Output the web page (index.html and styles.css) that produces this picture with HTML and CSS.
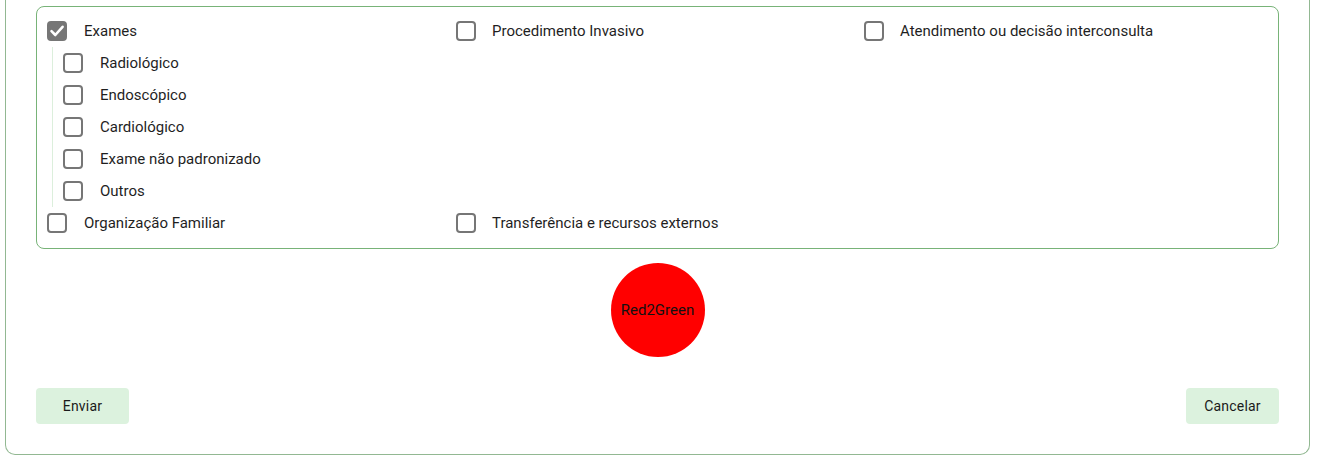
FILE: index.html
```html
<!DOCTYPE html>
<html lang="pt">
<head>
<meta charset="utf-8">
<link rel="stylesheet" href="styles.css">
</head>
<body>
<div class="card">
  <div class="fieldset">
    <div class="grid">
      <div class="group">
        <label class="item"><span class="box checked"><svg viewBox="0 0 20 20" width="20" height="20"><path d="M4.5 10.2 L8.3 14 L15.6 5.8" fill="none" stroke="#fff" stroke-width="2.6" stroke-linecap="round" stroke-linejoin="round"/></svg></span><span class="text">Exames</span></label>
        <div class="sub">
          <label class="item"><span class="box"></span><span class="text">Radiológico</span></label>
          <label class="item"><span class="box"></span><span class="text">Endoscópico</span></label>
          <label class="item"><span class="box"></span><span class="text">Cardiológico</span></label>
          <label class="item"><span class="box"></span><span class="text">Exame não padronizado</span></label>
          <label class="item"><span class="box"></span><span class="text">Outros</span></label>
        </div>
      </div>
      <label class="item tight"><span class="box"></span><span class="text">Procedimento Invasivo</span></label>
      <label class="item tight"><span class="box"></span><span class="text">Atendimento ou decisão interconsulta</span></label>
      <label class="item"><span class="box"></span><span class="text">Organização Familiar</span></label>
      <label class="item tight"><span class="box"></span><span class="text">Transferência e recursos externos</span></label>
    </div>
  </div>
  <div class="circle-wrap"><div class="circle">Red2Green</div></div>
  <div class="actions">
    <button class="btn">Enviar</button>
    <button class="btn">Cancelar</button>
  </div>
</div>
</body>
</html>
```

FILE: styles.css
```css
html, body {
  margin: 0;
  padding: 0;
  background: #fff;
}
body {
  font-family: Roboto, "Liberation Sans", sans-serif;
  color: #1f1f1f;
}
.card {
  margin-left: 5px;
  width: 1305px;
  box-sizing: border-box;
  height: 455px;
  border: 1px solid #92b892;
  border-top: 0;
  border-radius: 0 0 10px 10px;
  padding: 6px 30px 0 30px;
}
.fieldset {
  border: 1px solid #78b378;
  border-radius: 8px;
  padding: 8px 10px 9px 10px;
}
.grid {
  display: grid;
  grid-template-columns: 409px 408px 1fr;
  align-items: start;
}
.item {
  display: flex;
  align-items: center;
  height: 32px;
  font-size: 15px;
}
.box {
  width: 20px;
  height: 20px;
  box-sizing: border-box;
  border: 2px solid #767676;
  border-radius: 4px;
  margin-right: 17px;
  flex: none;
  display: flex;
}
.tight .box {
  margin-right: 16px;
}
.box.checked {
  background: #767676;
}
.box.checked svg {
  margin: -2px;
}
.sub {
  margin-left: 5px;
  border-left: 1px solid #dcefdc;
  padding-left: 10px;
}
.circle-wrap {
  display: flex;
  justify-content: center;
  margin-top: 14px;
}
.circle {
  width: 94px;
  height: 94px;
  border-radius: 50%;
  background: #ff0000;
  display: flex;
  align-items: center;
  justify-content: center;
  font-size: 15px;
  color: #111;
}
.actions {
  display: flex;
  justify-content: space-between;
  margin-top: 31px;
}
.btn {
  width: 93px;
  height: 36px;
  border: 0;
  border-radius: 4px;
  background: #dcf2de;
  font-family: Roboto, "Liberation Sans", sans-serif;
  font-size: 14px;
  font-weight: 400;
  letter-spacing: 0.2px;
  color: #1a1a1a;
  padding: 0;
}
```
